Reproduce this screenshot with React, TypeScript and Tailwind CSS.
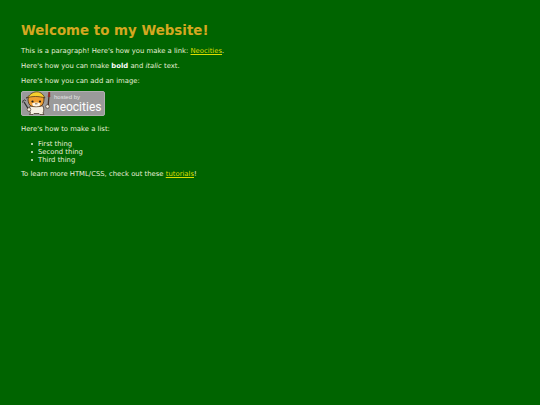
function Badge() {
  return (
    <div className="relative mt-[6px] h-[25px] w-[84px] rounded-[2px] bg-[#9a9a9a] border border-[#b0b0b0]">
      <svg className="absolute left-[-1px] top-[-1px]" width="32" height="25" viewBox="0 0 32 25">
        {/* wrench */}
        <path d="M3 11l5 8" stroke="#2f2f2f" strokeWidth="1.200" fill="none" />
        <path d="M1.500 11.500l1-2.500M4.500 10l-1-1.500" stroke="#2f2f2f" strokeWidth="1" fill="none" />
        {/* body */}
        <path d="M9 15h13c1 3 1 5 0 7l1 1.500h-4l-1-1h-5l-1 1H8.500l1-1.500c-1-2-1-5-.5-7z" fill="#f6f0e2" stroke="#3c2a18" strokeWidth=".7" />
        {/* head */}
        <path d="M7 8c1-4 4-5 8-5s8 2 8 5c0 3-1 6-3 7-3 1-7 1-10 0-2-1-3-4-3-7z" fill="#ef9f32" stroke="#3c2a18" strokeWidth=".8" />
        <path d="M11 12.500c2.500-1.500 6-1.500 8.500 0l-1 2.500c-2 .6-4.500 .6-6.500 0z" fill="#fff6e6" />
        {/* hat */}
        <path d="M5 7c3-1 4-5 9-6 5-1 8 2 10 6-6-2-13-2-19 0z" fill="#f5cf2e" stroke="#3c2a18" strokeWidth=".7" />
        <circle cx="11.500" cy="10.500" r="1.100" fill="#1c1c1c" />
        <circle cx="19" cy="10.500" r="1.100" fill="#1c1c1c" />
        <path d="M14 12.800h2.500" stroke="#3c2a18" strokeWidth=".7" />
        {/* brush */}
        <path d="M27 16l1-11" stroke="#4a3224" strokeWidth="1.300" />
        <path d="M26.800 6l.5-5h1.800l.2 5z" fill="#8c2f2a" />
        {/* paws */}
        <circle cx="26.500" cy="15.500" r="1.800" fill="#f6f0e2" stroke="#3c2a18" strokeWidth=".6" />
        <circle cx="8" cy="18.500" r="1.800" fill="#f6f0e2" stroke="#3c2a18" strokeWidth=".6" />
      </svg>
      <div className="absolute left-[32px] top-[2px] whitespace-nowrap text-[6px] leading-[6px] text-[#e4e4e4] [font-family:'Liberation_Sans',sans-serif]">hosted by</div>
      <div className="absolute left-[31px] top-[8px] whitespace-nowrap text-[12px] leading-[14px] text-white [font-family:'Roboto',sans-serif]">neocities</div>
    </div>
  );
}

export default function App() {
  const items = ["First thing", "Second thing", "Third thing"];
  return (
    <div className="min-h-[405px] bg-[#006400] pl-[21px] pt-[22px] text-[6.850px] leading-[8px] text-[#e6efd6] [font-family:'DejaVu_Sans',sans-serif]">
      <h1 className="text-[13.400px] leading-[17px] font-bold text-[#d4a820]">Welcome to my Website!</h1>
      <p className="mt-[8px]">
        This is a paragraph! Here's how you make a link: <a className="text-[#dcdc00] underline">Neocities</a>.
      </p>
      <p className="mt-[7px]">
        Here's how you can make <strong className="text-white">bold</strong> and <em className="italic">italic</em> text.
      </p>
      <p className="mt-[7px]">Here's how you can add an image:</p>
      <Badge />
      <p className="mt-[9px]">Here's how to make a list:</p>
      <ul className="mt-[7px] pl-[9.500px]">
        {items.map((item) => (
          <li key={item} className="flex items-center gap-[5px]">
            <span className="h-[2.500px] w-[2.500px] rounded-full bg-[#e6efd6]" />
            {item}
          </li>
        ))}
      </ul>
      <p className="mt-[6px]">
        To learn more HTML/CSS, check out these <a className="text-[#dcdc00] underline">tutorials</a>!
      </p>
    </div>
  );
}
